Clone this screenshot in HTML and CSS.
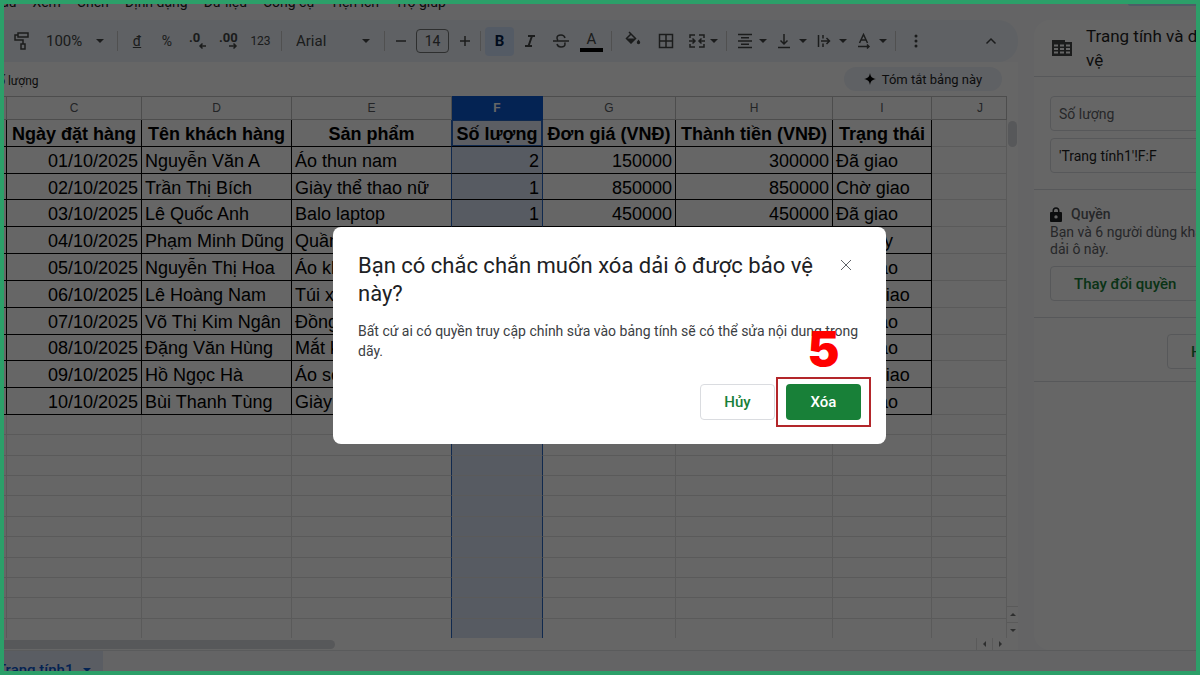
FILE: index.html
```html
<!DOCTYPE html>
<html lang="vi">
<head>
    <meta charset="UTF-8">
    <meta name="viewport" content="width=device-width, initial-scale=1.0">
    <title>Trang tính</title>
    <link rel="stylesheet" href="styles.css">
</head>
<body>
    <div class="frame">
        <header class="menu-bar">
            <nav class="menu">
                <a href="#">Dấu</a>
                <a href="#">Xem</a>
                <a href="#">Chèn</a>
                <a href="#">Định dạng</a>
                <a href="#">Dữ liệu</a>
                <a href="#">Công cụ</a>
                <a href="#">Tiện ích</a>
                <a href="#">Trợ giúp</a>
            </nav>
            <div class="share"></div>
        </header>

        <div class="workspace">
            <main class="sheet">
                <div class="toolbar">
                    <button class="tool tool-first" aria-label="Sao chép định dạng">
                        <svg width="18" height="20" viewBox="0 0 18 20" class="line"><path d="M5 2h10v4H5zM5 4H2v5h8v4M8 13h4v5H8z"/></svg>
                    </button>
                    <div class="pick pick-zoom">
                        <select aria-label="Thu phóng"><option>100%</option></select>
                        <span class="caret"></span>
                    </div>
                    <span class="sep"></span>
                    <button class="tool tool-small"><span class="currency">đ</span></button>
                    <button class="tool tool-small">%</button>
                    <button class="tool" aria-label="Giảm số thập phân">
                        <svg width="18" height="20" viewBox="0 0 18 20"><text x="0" y="11">.0</text><path class="line" d="M17 15h-6M13.500 12.500L11 15l2.500 2.500"/></svg>
                    </button>
                    <button class="tool" aria-label="Tăng số thập phân">
                        <svg width="20" height="20" viewBox="0 0 20 20"><text x="0" y="11">.00</text><path class="line" d="M10 15h7M14.500 12.500L17 15l-2.500 2.500"/></svg>
                    </button>
                    <button class="tool tool-digits">123</button>
                    <span class="sep"></span>
                    <div class="pick pick-font">
                        <select aria-label="Phông chữ"><option>Arial</option></select>
                        <span class="caret"></span>
                    </div>
                    <span class="sep"></span>
                    <button class="tool tool-step" aria-label="Giảm cỡ chữ">
                        <svg width="12" height="12" viewBox="0 0 12 12" class="line"><path d="M1 6h10"/></svg>
                    </button>
                    <input class="size-box" type="text" value="14" aria-label="Cỡ chữ">
                    <button class="tool tool-step" aria-label="Tăng cỡ chữ">
                        <svg width="12" height="12" viewBox="0 0 12 12" class="line"><path d="M1 6h10M6 1v10"/></svg>
                    </button>
                    <span class="sep"></span>
                    <button class="tool tool-on">B</button>
                    <button class="tool" aria-label="In nghiêng">
                        <svg width="12" height="14" viewBox="0 0 12 14" class="line thick"><path d="M4 2h7M1 12h7M8 2L4.500 12"/></svg>
                    </button>
                    <button class="tool" aria-label="Gạch ngang">
                        <svg width="18" height="16" viewBox="0 0 18 16" class="line"><path d="M1 8h16M13 5c-.5-2-2-3-4-3-2.300 0-4 1.200-4 3 0 1 .4 1.700 1 2.200M5 11c.5 2 2 3 4 3 2.400 0 4-1.200 4-3 0-.6-.1-1-.4-1.500"/></svg>
                    </button>
                    <button class="tool tool-color" aria-label="Màu văn bản"><span>A</span></button>
                    <span class="sep"></span>
                    <button class="tool tool-wide" aria-label="Màu nền">
                        <svg width="18" height="20" viewBox="0 0 18 20"><path class="line" d="M5 1l6.500 6.500L7 12 2.500 7.500 7 3"/><path d="M2.500 7.500h9L7 12.500zM14.500 8.500c1 1.300 1.700 2.100 1.700 3a1.700 1.700 0 0 1-3.400 0c0-.9.700-1.700 1.700-3z"/></svg>
                    </button>
                    <button class="tool tool-wide" aria-label="Đường viền">
                        <svg width="16" height="16" viewBox="0 0 16 16" class="line"><path d="M1.500 1.500h13v13h-13zM8 1.500v13M1.500 8h13"/></svg>
                    </button>
                    <button class="tool tool-menu" aria-label="Hợp nhất ô">
                        <svg width="18" height="16" viewBox="0 0 18 16" class="line"><path d="M7 2H2v3M2 11v3h5M11 2h5v3M16 11v3h-5M1 8h6M4.500 5.500L7 8l-2.500 2.500M17 8h-6M13.500 5.500L11 8l2.500 2.500"/></svg>
                        <span class="caret"></span>
                    </button>
                    <span class="sep"></span>
                    <button class="tool tool-menu" aria-label="Căn ngang">
                        <svg width="16" height="16" viewBox="0 0 16 16" class="line"><path d="M1 1.500h14M4 4.700h8M1 8h14M4 11.300h8M1 14.500h14"/></svg>
                        <span class="caret"></span>
                    </button>
                    <button class="tool tool-menu" aria-label="Căn dọc">
                        <svg width="14" height="16" viewBox="0 0 14 16" class="line"><path d="M7 1v10M3.500 7.500L7 11l3.500-3.500M1 14.500h12"/></svg>
                        <span class="caret"></span>
                    </button>
                    <button class="tool tool-menu" aria-label="Xuống dòng">
                        <svg width="14" height="16" viewBox="0 0 14 16" class="line"><path d="M1.500 2v12M6 2v3.500M6 10.500V14M4 8h8.500M9.500 5L12.500 8l-3 3"/></svg>
                        <span class="caret"></span>
                    </button>
                    <button class="tool tool-menu" aria-label="Xoay văn bản">
                        <svg width="14" height="16" viewBox="0 0 14 16" class="line"><path d="M2.500 10L6.500 1.500 10.500 10M4 7h5M1 13.500h11M10 11.500l2 2-2 2"/></svg>
                        <span class="caret"></span>
                    </button>
                    <span class="sep"></span>
                    <button class="tool" aria-label="Thêm">
                        <svg width="4" height="14" viewBox="0 0 4 14"><circle cx="2" cy="2" r="1.500"/><circle cx="2" cy="7" r="1.500"/><circle cx="2" cy="12" r="1.500"/></svg>
                    </button>
                    <button class="tool tool-last" aria-label="Ẩn trình đơn">
                        <svg width="12" height="8" viewBox="0 0 12 8" class="line"><path d="M1.500 6.500L6 2l4.500 4.500"/></svg>
                    </button>
                </div>

                <div class="formula-bar">
                    <span class="formula">Số lượng</span>
                    <button class="summary">
                        <svg width="12" height="12" viewBox="0 0 12 12"><path d="M6 0C6.600 3.800 8.200 5.400 12 6 8.200 6.600 6.600 8.200 6 12 5.400 8.200 3.800 6.600 0 6 3.800 5.400 5.400 3.800 6 0z"/></svg>
                        Tóm tắt bảng này
                    </button>
                </div>

                <div class="grid-area">
                    <div class="tables">
                        <table class="cells data">
                            <colgroup><col class="col-b"><col class="col-c"><col class="col-d"><col class="col-e"><col class="col-f"><col class="col-g"><col class="col-h"><col class="col-i"><col></colgroup>
                            <thead>
                                <tr><th></th><th>C</th><th>D</th><th>E</th><th>F</th><th>G</th><th>H</th><th>I</th><th class="last">J</th></tr>
                            </thead>
                            <tbody>
                                <tr class="titles"><td></td><td>Ngày đặt hàng</td><td>Tên khách hàng</td><td>Sản phẩm</td><td>Số lượng</td><td>Đơn giá (VNĐ)</td><td>Thành tiền (VNĐ)</td><td>Trạng thái</td><td></td></tr>
                                <tr><td></td><td>01/10/2025</td><td>Nguyễn Văn A</td><td>Áo thun nam</td><td>2</td><td>150000</td><td>300000</td><td>Đã giao</td><td></td></tr>
                                <tr><td></td><td>02/10/2025</td><td>Trần Thị Bích</td><td>Giày thể thao nữ</td><td>1</td><td>850000</td><td>850000</td><td>Chờ giao</td><td></td></tr>
                                <tr><td></td><td>03/10/2025</td><td>Lê Quốc Anh</td><td>Balo laptop</td><td>1</td><td>450000</td><td>450000</td><td>Đã giao</td><td></td></tr>
                                <tr><td></td><td>04/10/2025</td><td>Phạm Minh Dũng</td><td>Quần</td><td></td><td></td><td></td><td>Đã hủy</td><td></td></tr>
                                <tr><td></td><td>05/10/2025</td><td>Nguyễn Thị Hoa</td><td>Áo kh</td><td></td><td></td><td></td><td>Đã giao</td><td></td></tr>
                                <tr><td></td><td>06/10/2025</td><td>Lê Hoàng Nam</td><td>Túi x</td><td></td><td></td><td></td><td>Chờ giao</td><td></td></tr>
                                <tr><td></td><td>07/10/2025</td><td>Võ Thị Kim Ngân</td><td>Đồng</td><td></td><td></td><td></td><td>Đã giao</td><td></td></tr>
                                <tr><td></td><td>08/10/2025</td><td>Đặng Văn Hùng</td><td>Mắt k</td><td></td><td></td><td></td><td>Đã giao</td><td></td></tr>
                                <tr><td></td><td>09/10/2025</td><td>Hồ Ngọc Hà</td><td>Áo sơ</td><td></td><td></td><td></td><td>Chờ giao</td><td></td></tr>
                                <tr><td></td><td>10/10/2025</td><td>Bùi Thanh Tùng</td><td>Giày</td><td></td><td></td><td></td><td>Đã giao</td><td></td></tr>
                            </tbody>
                        </table>
                        <table class="cells blank">
                            <colgroup><col class="col-b"><col class="col-c"><col class="col-d"><col class="col-e"><col class="col-f"><col class="col-g"><col class="col-h"><col class="col-i"><col></colgroup>
                            <tbody id="blankRows"></tbody>
                        </table>
                    </div>
                    <div class="scroll-y">
                        <div class="thumb-y"></div>
                        <span class="arrow"><i class="up"></i></span>
                        <span class="arrow"><i class="down"></i></span>
                    </div>
                </div>
                <div class="scroll-x">
                    <div class="thumb-x"></div>
                    <span class="arrow-x"><i class="left"></i></span>
                    <span class="arrow-x"><i class="right"></i></span>
                </div>
            </main>

            <aside class="panel">
                <div class="panel-body">
                    <div class="panel-head">
                        <svg width="20" height="16" viewBox="0 0 20 16"><path fill-rule="evenodd" d="M0 0h13v2h7v14H0zM2 4.500v2h4v-2zM8 4.500v2h4v-2zM14 4.500v2h4v-2zM2 8v2h4V8zM8 8v2h4V8zM14 8v2h4V8zM2 11.500v2h4v-2zM8 11.500v2h4v-2zM14 11.500v2h4v-2z"/></svg>
                        <h2>Trang tính và dải ô được bảo vệ</h2>
                    </div>
                    <div class="panel-fields">
                        <input type="text" placeholder="Số lượng" aria-label="Mô tả">
                        <input type="text" value="'Trang tính1'!F:F" aria-label="Dải ô">
                    </div>
                    <div class="panel-rights">
                        <h3>
                            <svg width="12" height="15" viewBox="0 0 12 15"><path fill-rule="evenodd" d="M2.500 5V3.800a3.500 3.500 0 0 1 7 0V5H11a1 1 0 0 1 1 1v8a1 1 0 0 1-1 1H1a1 1 0 0 1-1-1V6a1 1 0 0 1 1-1zM4 5h4V3.800a2 2 0 0 0-4 0zM6 8.200a1.700 1.700 0 1 0 0 3.400 1.700 1.700 0 0 0 0-3.400z"/></svg>
                            Quyền
                        </h3>
                        <p>Bạn và 6 người dùng khác có thể chỉnh sửa dải ô này.</p>
                        <button class="outlined">Thay đổi quyền</button>
                    </div>
                    <div class="panel-foot">
                        <button class="outlined">Hủy</button>
                    </div>
                </div>
            </aside>
        </div>

        <footer class="tabs">
            <button class="tab">Trang tính1 <span class="caret"></span></button>
        </footer>

        <div class="scrim"></div>

        <dialog class="confirm" open aria-labelledby="confirmTitle">
            <div class="confirm-head">
                <h1 id="confirmTitle">Bạn có chắc chắn muốn xóa dải ô được bảo vệ này?</h1>
                <button class="close" aria-label="Đóng">
                    <svg width="12" height="12" viewBox="0 0 12 12"><path d="M1 1l10 10M11 1L1 11"/></svg>
                </button>
            </div>
            <p>Bất cứ ai có quyền truy cập chỉnh sửa vào bảng tính sẽ có thể sửa nội dung trong dãy.</p>
            <div class="confirm-actions">
                <button class="btn">Hủy</button>
                <div class="marked">
                    <button class="btn btn-primary">Xóa</button>
                    <span class="step">5</span>
                </div>
            </div>
        </dialog>
    </div>

    <script>
        // empty rows below the order list
        const blankRows = document.getElementById("blankRows");
        for (let i = 0; i < 11; i++) {
            const row = blankRows.insertRow();
            for (let j = 0; j < 9; j++) {
                row.insertCell();
            }
        }
    </script>
</body>
</html>
```

FILE: styles.css
```css
* {
    box-sizing: border-box;
}

body {
    margin: 0;
    font-family: Roboto, "Liberation Sans", sans-serif;
    color: #1f1f1f;
}

button, input, select {
    font-family: inherit;
    color: inherit;
    margin: 0;
}

button {
    padding: 0;
    border: none;
    background: none;
    cursor: pointer;
}

h1, h2, h3, p {
    margin: 0;
    font-weight: normal;
}

.frame {
    position: relative;
    display: flex;
    flex-direction: column;
    height: 100vh;
    border: 4px solid #2c9f69;
    background: #f9fbfd;
    overflow: hidden;
}

/* menu */
.menu-bar {
    display: flex;
    justify-content: space-between;
    height: 16px;
}

.menu {
    display: flex;
    gap: 16px;
    margin: -11px 0 0 -12px;
    font-size: 14px;
    line-height: 18px;
}

.menu a {
    color: inherit;
    text-decoration: none;
}

.share {
    width: 68px;
    height: 2px;
    background: #c2e7ff;
    border-radius: 0 0 0 8px;
}

.workspace {
    display: flex;
    gap: 16px;
    flex: 1;
    min-height: 0;
}

.sheet {
    display: flex;
    flex-direction: column;
    flex: 1;
    min-width: 0;
}

/* toolbar */
.toolbar {
    display: flex;
    align-items: center;
    flex-shrink: 0;
    height: 42px;
    padding-right: 12px;
    background: #edf2fa;
    border-radius: 0 20px 20px 0;
    color: #444746;
    fill: #444746;
}

.tool {
    display: flex;
    align-items: center;
    justify-content: center;
    flex-shrink: 0;
    width: 31px;
    height: 29px;
    font-size: 15px;
}

.tool text {
    font-size: 13px;
    font-weight: bold;
}

.tool-first {
    width: 36px;
}

.tool-small {
    width: 30px;
    font-size: 14px;
}

.tool-digits {
    width: 33px;
    font-size: 12px;
}

.tool-step {
    width: 23px;
}

.tool-wide {
    width: 33px;
}

.tool-on {
    width: 29px;
    border-radius: 4px;
    background: #d3e3fd;
    color: #041e49;
    font-weight: bold;
}

.tool-menu {
    width: 40px;
    justify-content: space-between;
    padding: 0 4px 0 6px;
}

.tool-last {
    margin-left: auto;
}

.tool-color span {
    width: 23px;
    border-bottom: 4px solid #000;
    line-height: 17px;
}

.currency {
    text-decoration: underline;
}

.line {
    fill: none;
    stroke: #444746;
    stroke-width: 1.5;
}

.thick {
    stroke-width: 2;
}

.sep {
    width: 1px;
    height: 20px;
    margin: 0 4px;
    background: #c7c7c7;
    flex-shrink: 0;
}

.caret {
    border: 4px solid transparent;
    border-top-color: currentColor;
    border-bottom: none;
}

.pick {
    display: flex;
    align-items: center;
    justify-content: space-between;
    flex-shrink: 0;
    padding: 0 9px 0 6px;
}

.pick select {
    appearance: none;
    border: none;
    background: none;
    padding: 0;
    font-size: 15px;
}

.pick-zoom {
    width: 73px;
}

.pick-font {
    width: 94px;
    padding: 0 10px;
}

.size-box {
    width: 33px;
    height: 24px;
    margin: 0 4px;
    padding: 0;
    border: 1px solid #747775;
    border-radius: 4px;
    background: none;
    text-align: center;
    font-size: 14px;
}

/* formula bar */
.formula-bar {
    display: flex;
    align-items: center;
    justify-content: space-between;
    flex-shrink: 0;
    height: 34px;
    padding-right: 16px;
    background: #fff;
}

.formula {
    margin-left: -13px;
    padding-top: 4px;
    font-size: 12px;
}

.summary {
    display: flex;
    align-items: center;
    justify-content: center;
    gap: 6px;
    width: 158px;
    height: 24px;
    border-radius: 12px;
    background: #edf2fa;
    font-size: 13px;
}

/* cells */
.grid-area {
    display: flex;
    flex: 1;
    min-height: 0;
}

.tables {
    flex: 1;
    min-width: 0;
    background: #fff;
    overflow: hidden;
}

.cells {
    width: 100%;
    table-layout: fixed;
    border-collapse: separate;
    border-spacing: 0;
    font-family: "Liberation Sans", Arial, sans-serif;
    font-size: 18px;
    line-height: 20px;
    color: #000;
}

.col-b { width: 3px; }
.col-c { width: 135px; }
.col-d { width: 150px; }
.col-e { width: 160px; }
.col-f { width: 91px; }
.col-g { width: 133px; }
.col-h { width: 157px; }
.col-i { width: 99px; }

.data {
    height: 319px;
}

.blank {
    height: 224px;
}

.cells td, .cells th {
    padding: 0 3px;
    border-right: 1px solid #e1e1e1;
    border-bottom: 1px solid #e1e1e1;
    white-space: nowrap;
    overflow: hidden;
}

.data td {
    padding-top: 2px;
}

.data th {
    height: 24px;
    border-top: 1px solid #c0c0c0;
    border-color: #c0c0c0;
    color: #575b5f;
    font-size: 12px;
    font-weight: normal;
}

.data .last {
    padding-left: 25px;
}

.data th:nth-child(5) {
    background: #0b57d0;
    border-color: #0b57d0;
    color: #fff;
    font-weight: bold;
}

.data td:nth-child(-n+8) {
    border-color: #000;
}

.data td:nth-child(2), .data td:nth-child(5), .data td:nth-child(6), .data td:nth-child(7) {
    text-align: right;
}

.data .titles td {
    padding: 2px 0 0;
    text-align: center;
    font-weight: bold;
}

.cells td:nth-child(5) {
    background: #dae4f6;
    border-right-color: #2a66c4;
}

.cells td:nth-child(4) {
    border-right-color: #2a66c4;
}

.data .titles td:nth-child(5) {
    background: #e6ecf7;
    box-shadow: inset 0 0 0 1px #2a66c4;
}

/* scrollbars */
.scroll-y {
    display: flex;
    flex-direction: column;
    width: 11px;
    padding-top: 25px;
    background: #fff;
}

.thumb-y {
    width: 9px;
    height: 26px;
    margin: 0 auto auto;
    border-radius: 5px;
    background: #dadce0;
}

.arrow, .arrow-x {
    display: flex;
    align-items: center;
    justify-content: center;
    height: 16px;
    border-top: 1px solid #e1e1e1;
}

.arrow-x {
    width: 16px;
    height: 100%;
    border-top: none;
    border-left: 1px solid #e1e1e1;
}

.arrow i, .arrow-x i {
    border: 3px solid transparent;
}

.arrow .up {
    border-top: none;
    border-bottom-color: #747775;
}

.arrow .down {
    border-bottom: none;
    border-top-color: #747775;
}

.arrow-x .left {
    border-left: none;
    border-right-color: #747775;
}

.arrow-x .right {
    border-right: none;
    border-left-color: #747775;
}

.scroll-x {
    display: flex;
    align-items: center;
    flex-shrink: 0;
    height: 12px;
    padding-right: 10px;
    background: #fff;
}

.thumb-x {
    width: 33%;
    height: 9px;
    margin-right: auto;
    border-radius: 0 5px 5px 0;
    background: #dadce0;
}

/* side panel */
.panel {
    width: 162px;
    overflow: hidden;
    border-radius: 16px 0 0 16px;
    background: #fff;
}

.panel-body {
    width: 300px;
}

.panel-head {
    display: flex;
    align-items: center;
    gap: 14px;
    height: 57px;
    padding: 0 16px 0 18px;
    border-bottom: 1px solid #dadce0;
    fill: #444746;
}

.panel-head svg {
    flex-shrink: 0;
}

.panel-head h2 {
    font-size: 17px;
    line-height: 24px;
}

.panel-fields {
    display: flex;
    flex-direction: column;
    gap: 7px;
    padding: 19px 16px 16px;
    border-bottom: 1px solid #dadce0;
}

.panel-fields input {
    height: 35px;
    padding: 0 8px;
    border: 1px solid #dadce0;
    border-radius: 4px;
    font-size: 14px;
}

.panel-fields input::placeholder {
    color: #5f6368;
}

.panel-rights {
    padding: 14px 16px 16px;
    border-bottom: 1px solid #dadce0;
    color: #5f6368;
    font-size: 14px;
    line-height: 17px;
}

.panel-rights h3 {
    display: flex;
    align-items: center;
    gap: 9px;
    font-size: 14px;
    line-height: 20px;
    font-weight: 500;
    fill: #202124;
}

.panel-rights p {
    margin-bottom: 8px;
}

.outlined {
    height: 35px;
    padding: 0 23px;
    border: 1px solid #dadce0;
    border-radius: 4px;
    color: #188038;
    font-size: 15px;
    font-weight: 500;
}

.panel-foot {
    display: flex;
    padding: 16px 16px 12px 133px;
    border-bottom: 1px solid #dadce0;
}

/* sheet tabs */
.tabs {
    flex-shrink: 0;
    height: 21px;
    border-top: 1px solid #e1e3e6;
    overflow: hidden;
}

.tab {
    display: flex;
    align-items: center;
    gap: 10px;
    height: 38px;
    padding: 0 12px 0 0;
    margin-left: -7px;
    background: #e1e9f7;
    color: #0b57d0;
    font-size: 15px;
    font-weight: 500;
}

/* confirm dialog */
.scrim {
    position: absolute;
    inset: 0;
    background: rgba(0, 0, 0, 0.6);
}

.confirm {
    position: absolute;
    top: 223px;
    left: 329px;
    width: 553px;
    margin: 0;
    padding: 25px 25px 17px;
    border: none;
    border-radius: 8px;
    background: #fff;
    color: #202124;
}

.confirm-head {
    display: flex;
    align-items: flex-start;
    justify-content: space-between;
}

.confirm h1 {
    width: 462px;
    font-size: 22px;
    line-height: 28px;
}

.close {
    display: flex;
    align-items: center;
    justify-content: center;
    width: 30px;
    height: 26px;
}

.close svg {
    stroke: #5f6368;
}

.confirm p {
    margin-top: 13px;
    color: #3c4043;
    font-size: 14px;
    line-height: 20px;
}

.confirm-actions {
    display: flex;
    align-items: center;
    justify-content: flex-end;
    gap: 1px;
    margin: 16px -10px 0 0;
}

.btn {
    width: 75px;
    height: 36px;
    border: 1px solid #dadce0;
    border-radius: 4px;
    color: #188038;
    font-size: 15px;
    font-weight: 500;
}

.btn-primary {
    border: none;
    background: #188038;
    color: #fff;
}

.marked {
    position: relative;
    display: flex;
    padding: 5px 8px;
    border: 2px solid #b3262a;
}

.step {
    position: absolute;
    bottom: 100%;
    left: 0;
    right: 0;
    color: #f00;
    font-family: Inter, sans-serif;
    font-size: 48px;
    font-weight: 900;
    line-height: 60px;
    text-align: center;
}
```
